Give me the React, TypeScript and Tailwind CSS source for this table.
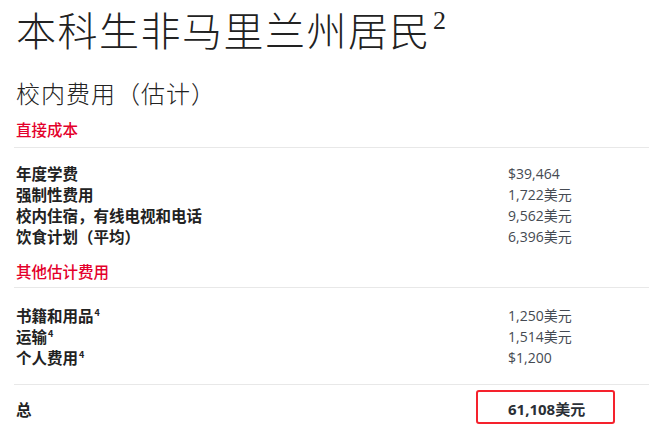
const direct = [
  { label: "年度学费", value: "$39,464" },
  { label: "强制性费用", value: "1,722美元" },
  { label: "校内住宿，有线电视和电话", value: "9,562美元" },
  { label: "饮食计划（平均）", value: "6,396美元" },
];

const other = [
  { label: "书籍和用品", sup: "4", value: "1,250美元" },
  { label: "运输", sup: "4", value: "1,514美元" },
  { label: "个人费用", sup: "4", value: "$1,200" },
];

const sans = "font-['Noto_Sans_CJK_SC',sans-serif]";
const num = "font-['Open_Sans','Noto_Sans_CJK_SC',sans-serif]";

function Row({ label, sup, value }: { label: string; sup?: string; value: string }) {
  return (
    <div className="grid grid-cols-[492px_1fr] leading-[21px]">
      <div className={`${sans} text-[15.5px] font-bold text-[#222]`}>
        {label}
        {sup && <sup className="text-[9px] ml-px top-[-6px]">{sup}</sup>}
      </div>
      <div className={`${num} text-[14px] text-[#454a52]`}>{value}</div>
    </div>
  );
}

export default function App() {
  return (
    <div className="bg-white w-[649px] h-[434px] overflow-hidden pl-4 pt-[5px]">
      <h1 className={`${sans} text-[40px] leading-[48px] font-light text-[#222] tracking-[1.5px]`}>
        本科生非马里兰州居民
        <sup className="font-['Liberation_Serif',serif] text-[26px] ml-0.5 top-[-17px]">2</sup>
      </h1>
      <h2 className={`${sans} mt-6 text-[24px] leading-[32px] font-light text-[#222] tracking-[1px]`}>
        校内费用（估计）
      </h2>
      <div className={`${sans} mt-[10px] text-[15.5px] leading-[21px] font-medium text-[#e4002b]`}>直接成本</div>
      <div className="-ml-0.5 mt-[7px] border-t border-[#e8e8e8]" />
      <div className="pt-[15px]">
        {direct.map((r) => (
          <Row key={r.label} {...r} />
        ))}
      </div>
      <div className={`${sans} mt-[14px] text-[15.5px] leading-[21px] font-medium text-[#e4002b]`}>其他估计费用</div>
      <div className="-ml-0.5 mt-[5px] border-t border-[#e8e8e8]" />
      <div className="pt-[17px]">
        {other.map((r) => (
          <Row key={r.label} {...r} />
        ))}
      </div>
      <div className="-ml-0.5 mt-[16px] border-t border-[#e8e8e8]" />
      <div className="pt-[14px] grid grid-cols-[492px_1fr] leading-[21px]">
        <div className={`${sans} text-[15.5px] font-bold text-[#222]`}>总</div>
        <div className="relative">
          <span className={`${num} text-[15px] font-bold text-[#2a2f36]`}>61,108美元</span>
          <div className="absolute -left-8 -top-[9px] w-[139px] h-[34px] border-2 border-[#f5222d] rounded-[3px]" />
        </div>
      </div>
    </div>
  );
}
